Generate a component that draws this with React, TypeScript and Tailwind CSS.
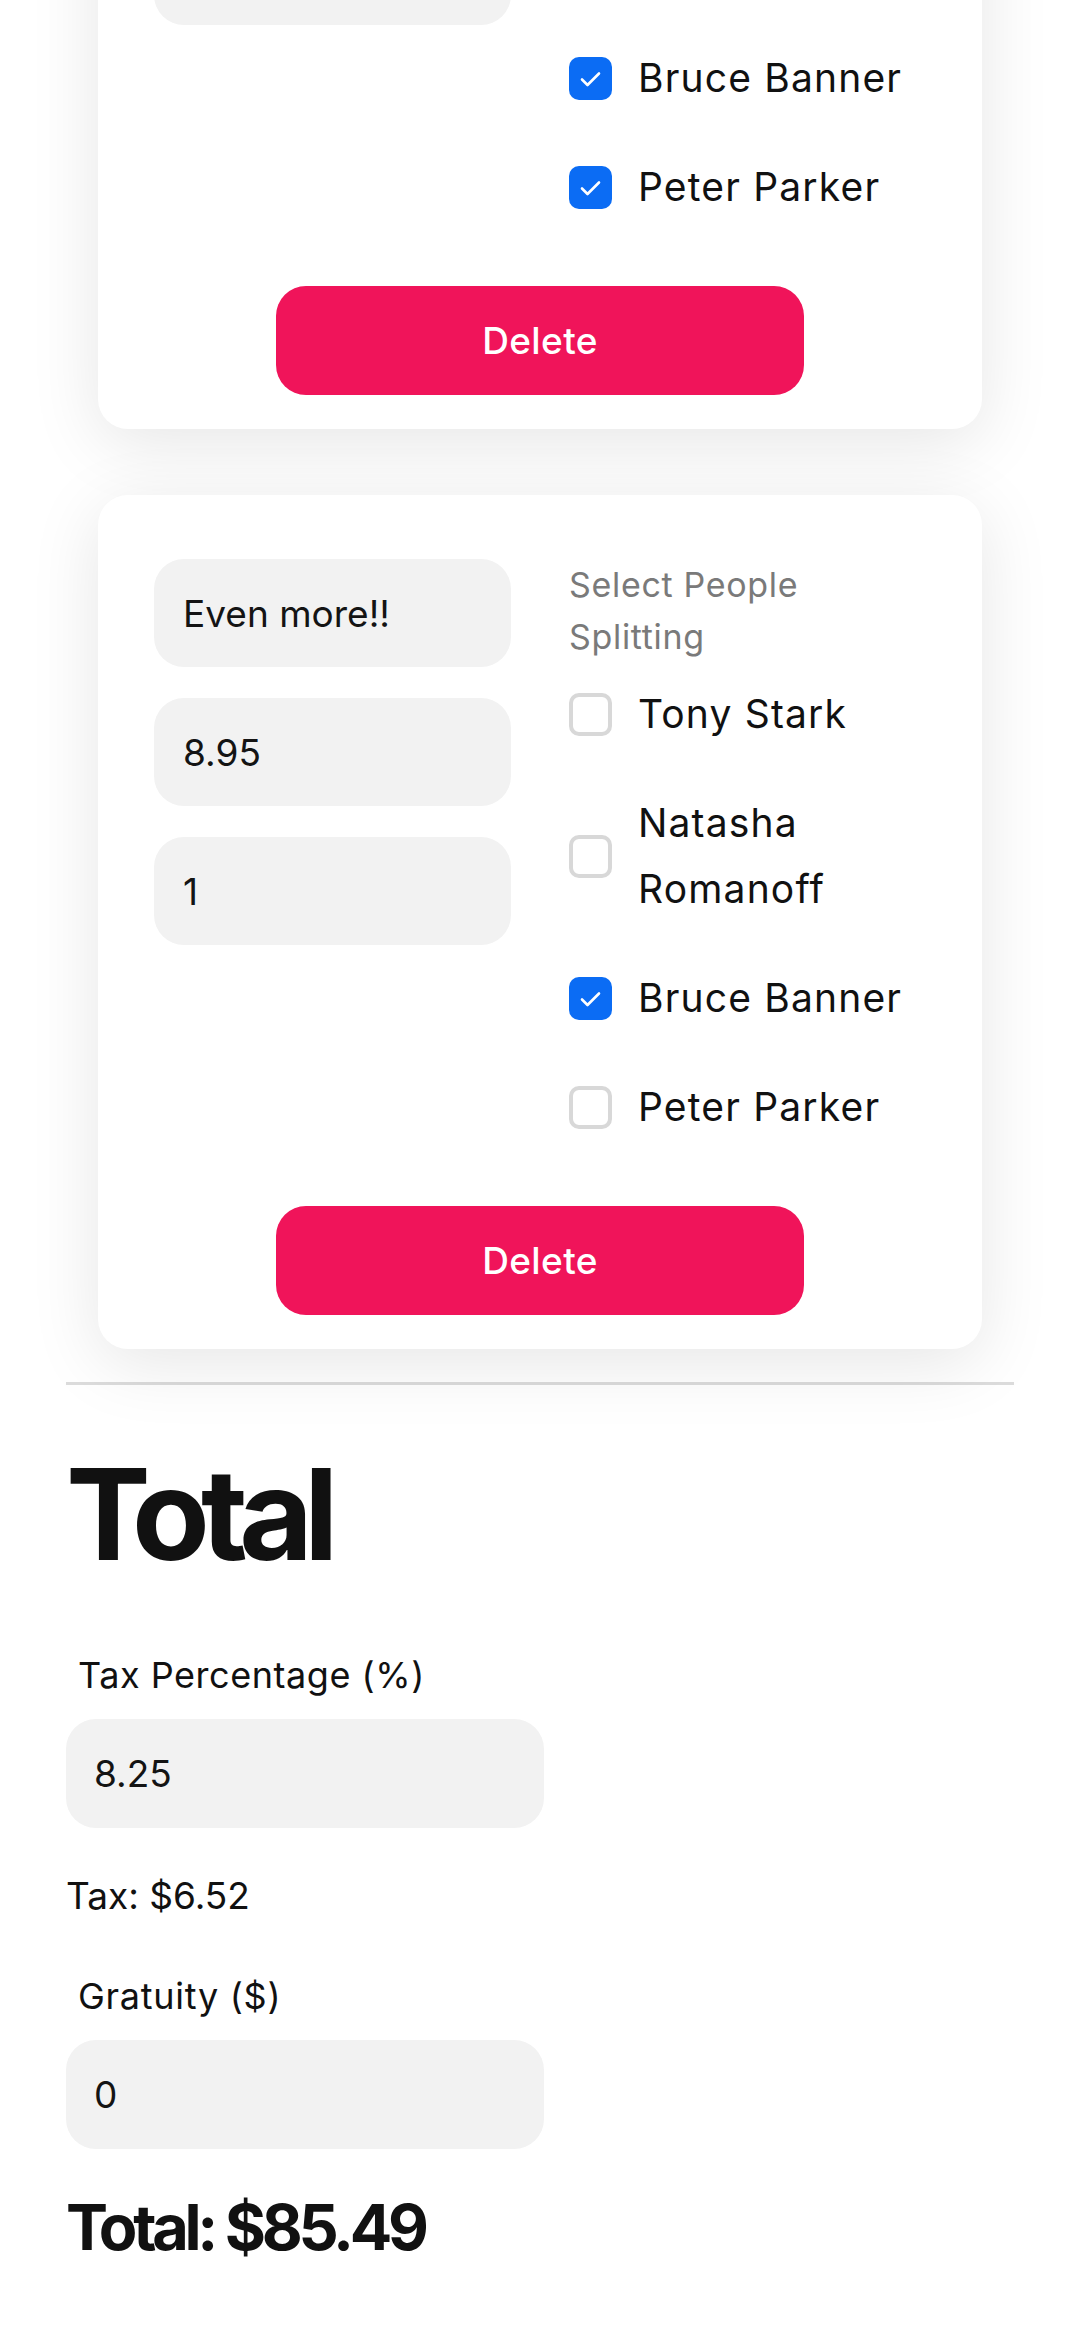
import React from "react";

type Person = { name: string; checked: boolean };

function Check({ checked }: { checked: boolean }) {
  if (checked) {
    return (
      <div className="flex h-[43px] w-[43px] shrink-0 items-center justify-center rounded-[10px] bg-[#0b6cf4]">
        <svg width="43" height="43" viewBox="0 0 43 43" fill="none">
          <path d="M13 22.5 L18.5 28 L30 16.5" stroke="white" strokeWidth="2.6" strokeLinecap="round" strokeLinejoin="round" />
        </svg>
      </div>
    );
  }
  return <div className="h-[43px] w-[43px] shrink-0 rounded-[10px] border-[4px] border-[#d8d8d8] bg-white" />;
}

function Field({ value }: { value: string }) {
  return (
    <input
      readOnly
      value={value}
      className="h-[108px] w-full rounded-[30px] bg-[#f2f2f2] px-[29px] text-[37px] text-[#141414] outline-none"
    />
  );
}

function ItemCard({ fields, people }: { fields: string[]; people: Person[] }) {
  return (
    <div className="rounded-[30px] bg-white px-[56px] pb-[34px] pt-[64px] shadow-[0_14px_70px_rgba(0,0,0,0.10)]">
      <div className="grid grid-cols-2 gap-x-[58px]">
        <div className="flex flex-col gap-[31px]">
          {fields.map((f, i) => (
            <Field key={i} value={f} />
          ))}
        </div>
        <div className="flex flex-col">
          <div className="mb-[18px] max-w-[280px] text-[34px] leading-[52px] tracking-[0.02em] text-[#7a7a7a]">
            Select People Splitting
          </div>
          <div className="flex flex-col gap-[43px]">
            {people.map((p) => (
              <label key={p.name} className="flex items-center gap-[26px]">
                <Check checked={p.checked} />
                <span className="text-[39px] leading-[66px] tracking-[0.03em] text-[#111]">{p.name}</span>
              </label>
            ))}
          </div>
        </div>
      </div>
      <div className="mt-[66px] flex justify-center">
        <button className="h-[109px] w-[528px] rounded-[30px] bg-[#f0145a] text-[37px] font-medium tracking-[0.01em] text-white">
          Delete
        </button>
      </div>
    </div>
  );
}

export default function App() {
  return (
    <div className="min-h-screen overflow-hidden bg-white font-['Inter',sans-serif] text-[#111]">
      <div className="px-[66px] pb-[80px]">
        <div className="mt-[-425px] flex flex-col gap-[66px] px-[32px]">
          <ItemCard
            fields={["More stuff", "12.50", "1"]}
            people={[
              { name: "Tony Stark", checked: false },
              { name: "Natasha Romanoff", checked: false },
              { name: "Bruce Banner", checked: true },
              { name: "Peter Parker", checked: true },
            ]}
          />
          <ItemCard
            fields={["Even more!!", "8.95", "1"]}
            people={[
              { name: "Tony Stark", checked: false },
              { name: "Natasha Romanoff", checked: false },
              { name: "Bruce Banner", checked: true },
              { name: "Peter Parker", checked: false },
            ]}
          />
        </div>
        <div className="mt-[33px] h-[3px] bg-[#dcdcdc]" />
        <h1 className="mt-[66px] text-[127px] font-bold leading-none tracking-[-0.07em] text-[#111]">Total</h1>
        <div className="mt-[75px] pl-[12px] text-[36px] leading-[44px] tracking-[0.015em] text-[#111]">Tax Percentage (%)</div>
        <input
          readOnly
          value="8.25"
          className="mt-[22px] block h-[109px] w-[478px] rounded-[30px] bg-[#f2f2f2] px-[28px] text-[37px] text-[#141414] outline-none"
        />
        <div className="mt-[46px] text-[37px] leading-[44px] text-[#111]">Tax: $6.52</div>
        <div className="mt-[56px] pl-[12px] text-[36px] leading-[44px] tracking-[0.02em] text-[#111]">Gratuity ($)</div>
        <input
          readOnly
          value="0"
          className="mt-[22px] block h-[109px] w-[478px] rounded-[30px] bg-[#f2f2f2] px-[28px] text-[37px] text-[#141414] outline-none"
        />
        <div className="mt-[40px] text-[63px] font-bold leading-[76px] tracking-[-0.068em] text-[#111]">Total: $85.49</div>
      </div>
    </div>
  );
}
